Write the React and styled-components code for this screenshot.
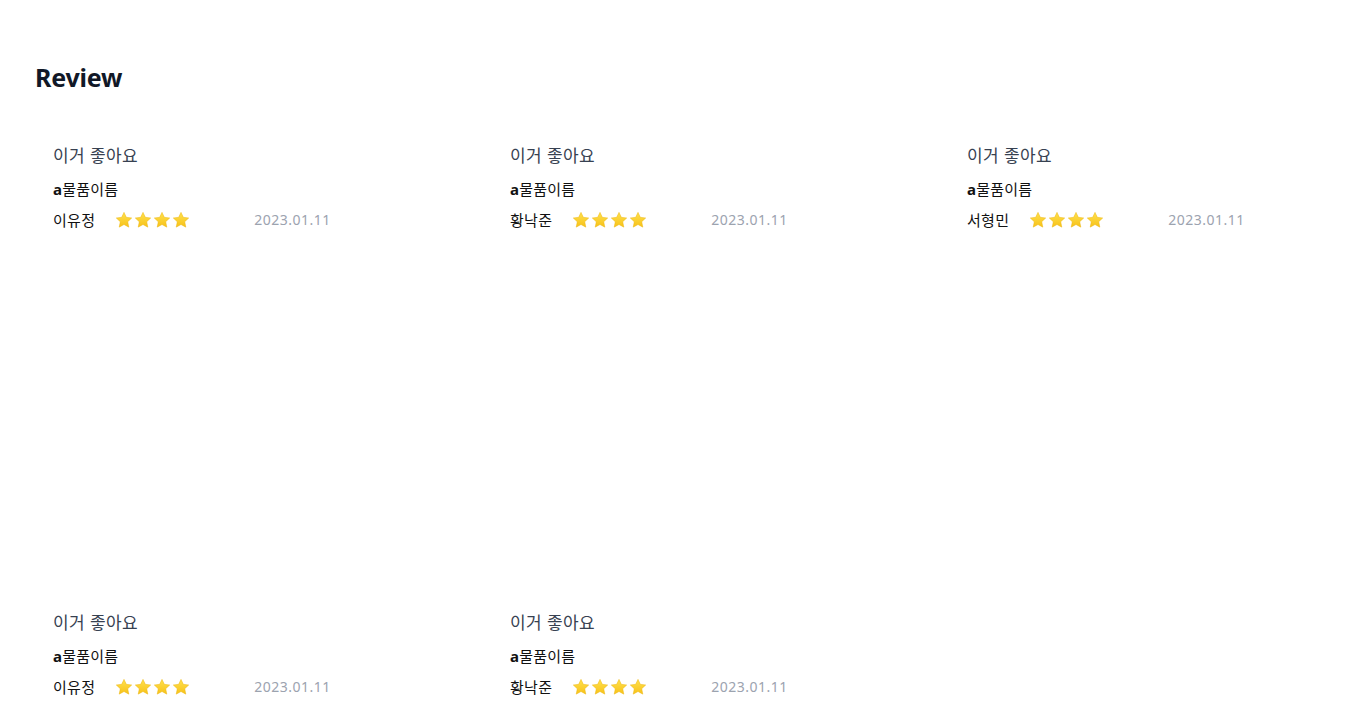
import styled, { createGlobalStyle } from "styled-components";

const GlobalStyle = createGlobalStyle`
  * { box-sizing: border-box; }
  body {
    margin: 0;
    font-family: "Noto Sans", "Noto Sans CJK KR", sans-serif;
    background: #fff;
    color: #111827;
  }
`;

const Page = styled.section`
  padding-top: 59px;
`;

const Title = styled.h2`
  margin: 0 0 0 35px;
  font-size: 25px;
  font-weight: 700;
  line-height: 36px;
  letter-spacing: -0.2px;
  color: #111827;
`;

const Grid = styled.div`
  margin-top: 41px;
  display: grid;
  grid-template-columns: repeat(3, 1fr);
`;

const Card = styled.article`
  height: 467px;
  padding: 8px 0 0 53px;
`;

const Headline = styled.p`
  margin: 0;
  font-size: 17px;
  letter-spacing: 0.4px;
  line-height: 24px;
  color: #374151;
`;

const Product = styled.p`
  margin: 10px 0 0;
  font-size: 15px;
  letter-spacing: 0.2px;
  line-height: 22px;
  color: #111;
`;

const Latin = styled.span`
  font-weight: 700;
`;

const Meta = styled.div`
  margin-top: 9px;
  display: flex;
  align-items: center;
  font-size: 15px;
  line-height: 22px;
`;

const Author = styled.span`
  color: #111;
  letter-spacing: 0.3px;
`;

const Stars = styled.span`
  display: flex;
  margin-left: 20px;
  gap: 1px;
`;

const DateText = styled.span`
  margin-left: 64px;
  font-size: 14px;
  color: #9ca3af;
  letter-spacing: 0.5px;
`;

function Star() {
  return (
    <svg width="18" height="18" viewBox="0 0 24 24">
      <defs>
        <linearGradient id="starGrad" x1="0" y1="0" x2="0" y2="1">
          <stop offset="0" stopColor="#ffe14d" />
          <stop offset="1" stopColor="#f7c21a" />
        </linearGradient>
      </defs>
      <path
        d="M12 1.8l3.1 6.6 7.2.9-5.3 5 1.4 7.2L12 18l-6.4 3.5L7 14.3l-5.3-5 7.2-.9z"
        fill="url(#starGrad)"
        stroke="#eab308"
        strokeWidth="0.6"
        strokeLinejoin="round"
      />
    </svg>
  );
}

const reviews = [
  { name: "이유정" },
  { name: "황낙준" },
  { name: "서형민" },
  { name: "이유정" },
  { name: "황낙준" },
];

export default function App() {
  return (
    <>
      <GlobalStyle />
      <Page>
        <Title>Review</Title>
        <Grid>
          {reviews.map((r, i) => (
            <Card key={i}>
              <Headline>이거 좋아요</Headline>
              <Product>
                <Latin>a</Latin>물품이름
              </Product>
              <Meta>
                <Author>{r.name}</Author>
                <Stars>
                  {[0, 1, 2, 3].map((s) => (
                    <Star key={s} />
                  ))}
                </Stars>
                <DateText>2023.01.11</DateText>
              </Meta>
            </Card>
          ))}
        </Grid>
      </Page>
    </>
  );
}
